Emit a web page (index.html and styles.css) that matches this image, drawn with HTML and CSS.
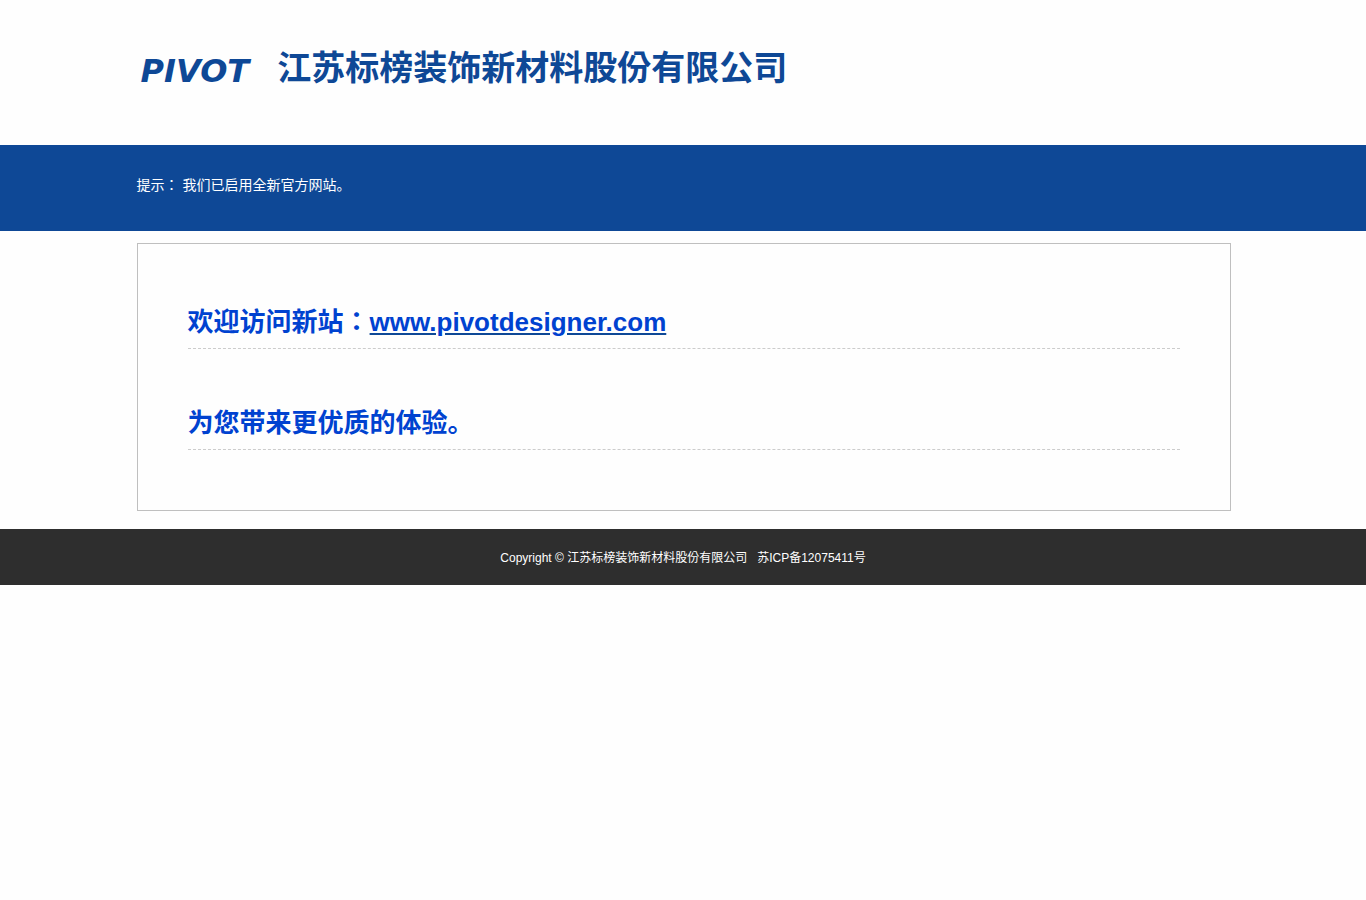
FILE: index.html
```
<!DOCTYPE html>
<html>
<head>
    <meta charset="UTF-8">
    <meta name="viewport" content="width=device-width, initial-scale=1.0">
    <title>江苏标榜装饰新材料股份有限公司</title>
    <link rel="stylesheet" href="styles.css">
</head>
<body>

<!-- Header -->
<header class="header">
    <div class="container brand">
        <div class="logo">PIVOT</div>
        <h1>江苏标榜装饰新材料股份有限公司</h1>
    </div>
</header>

<!-- Notice -->
<section class="notice">
    <div class="container">
        <p>提示： 我们已启用全新官方网站。</p>
    </div>
</section>

<!-- Content -->
<main class="container">
    <div class="content">
        <h2>欢迎访问新站：<a href="http://www.pivotdesigner.com">www.pivotdesigner.com</a></h2>
        <h2>为您带来更优质的体验。</h2>
    </div>
</main>

<!-- Footer -->
<footer class="footer">
    <p>Copyright © 江苏标榜装饰新材料股份有限公司 &nbsp; 苏ICP备12075411号</p>
</footer>

</body>
</html>
```
FILE: styles.css
```
body {
    font-family: "Liberation Sans", Arial, "Noto Sans CJK JP", sans-serif;
    font-size: 14px;
    line-height: 20px;
    margin: 0;
    padding: 0;
    background-color: #fefefe;
    color: #333;
}

h1, h2, p {
    margin: 0;
}

.container {
    width: 80%;
    margin: 0 auto;
}

.header {
    padding: 43px 0 46px;
}

.brand {
    display: flex;
    align-items: flex-start;
    gap: 28px;
    color: #0e4896;
}

.logo {
    padding-left: 4px;
    font-family: "DejaVu Sans", Verdana, sans-serif;
    font-size: 32px;
    line-height: 56px;
    font-weight: bold;
    font-style: oblique;
}

.brand h1 {
    font-size: 34px;
    line-height: 50px;
    font-weight: bold;
}

.notice {
    padding: 30px 0 36px;
    background-color: #0e4896;
    color: #fff;
}

.content {
    width: 100%;
    margin: 12px 0 18px;
    border: 1px solid #bfbfbf;
    padding: 54px 0 60px;
}

.content h2 {
    margin: 0 50px;
    padding: 4px 0 6px;
    border-bottom: 1px dashed #ccc;
    font-size: 26px;
    line-height: 40px;
    color: #0042d0;
}

.content h2 + h2 {
    margin-top: 50px;
}

.content a {
    color: #0042d0;
    text-decoration-color: #0e4896;
}

.footer {
    padding: 19px 0 17px;
    background-color: #2e2e2e;
    color: #fff;
    font-size: 12px;
    text-align: center;
}
```
